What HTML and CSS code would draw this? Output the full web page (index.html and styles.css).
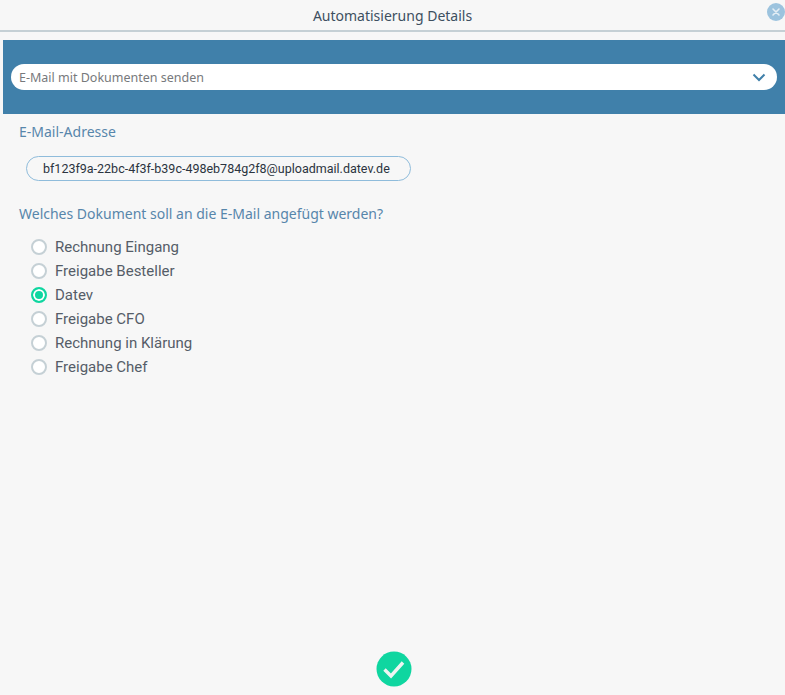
FILE: index.html
```html
<!DOCTYPE html>
<html lang="de">
<head>
    <meta charset="UTF-8">
    <meta name="viewport" content="width=device-width, initial-scale=1.0">
    <title>Automatisierung Details</title>
    <link rel="stylesheet" href="styles.css">
</head>
<body>
    <div class="page">
        <header class="header">
            <h1>Automatisierung Details</h1>
            <button class="closeBtn" aria-label="Schließen">
                <svg width="16" height="16" viewBox="0 0 16 16">
                    <path d="M5 5 L11 11 M11 5 L5 11" stroke="#e4eef5" stroke-width="1.6" stroke-linecap="round" fill="none"/>
                </svg>
            </button>
        </header>

        <div class="actionBar">
            <div class="actionSelect">
                <span>E-Mail mit Dokumenten senden</span>
                <svg width="14" height="9" viewBox="0 0 14 9">
                    <path d="M1.5 1.5 L7 7 L12.5 1.5" stroke="#4080aa" stroke-width="2" fill="none"/>
                </svg>
            </div>
        </div>

        <main class="content">
            <label class="fieldLabel">E-Mail-Adresse</label>
            <div class="emailBox">bf123f9a-22bc-4f3f-b39c-498eb784g2f8@uploadmail.datev.de</div>

            <label class="fieldLabel question">Welches Dokument soll an die E-Mail angefügt werden?</label>
            <ul class="options">
                <li><span class="radio"></span>Rechnung Eingang</li>
                <li><span class="radio"></span>Freigabe Besteller</li>
                <li><span class="radio checked"></span>Datev</li>
                <li><span class="radio"></span>Freigabe CFO</li>
                <li><span class="radio"></span>Rechnung in Klärung</li>
                <li><span class="radio"></span>Freigabe Chef</li>
            </ul>
        </main>

        <footer class="footer">
            <button class="confirmBtn" aria-label="Bestätigen">
                <svg width="36" height="36" viewBox="0 0 36 36">
                    <circle cx="18" cy="18" r="17.5" fill="#0fd6a0"/>
                    <path d="M8.5 18.5 L15 25 L27 11.5" stroke="#eef5f2" stroke-width="3.4" fill="none"/>
                </svg>
            </button>
        </footer>
    </div>
</body>
</html>
```

FILE: styles.css
```css
html, body {
    height: 100%;
}

body {
    margin: 0;
    background-color: #f7f7f7;
    font-family: 'Noto Sans', sans-serif;
    overflow: hidden;
}

.page {
    display: flex;
    flex-direction: column;
    height: 695px;
}

.header {
    display: flex;
    align-items: center;
    justify-content: center;
    height: 30px;
    border-bottom: 2px solid #c5d0d5;
    position: relative;
}

.header h1 {
    margin: 0;
    font-size: 14px;
    font-weight: 400;
    color: #3d4f5f;
}

.closeBtn {
    position: absolute;
    top: 3px;
    right: 0;
    width: 18px;
    height: 18px;
    padding: 1px;
    border: none;
    border-radius: 50%;
    background: #9cc3de;
}

.closeBtn svg {
    display: block;
}

.actionBar {
    display: flex;
    align-items: center;
    height: 74px;
    margin: 8px 0 0 3px;
    padding: 0 8px;
    background-color: #4080aa;
}

.actionSelect {
    flex: 1;
    display: flex;
    align-items: center;
    justify-content: space-between;
    height: 26px;
    padding: 0 11px 0 8px;
    background: white;
    border-radius: 13px;
    font-size: 12.5px;
    color: #77797c;
}

.content {
    flex: 1;
    padding: 8px 19px 0;
}

.fieldLabel {
    display: block;
    font-size: 14px;
    line-height: 20px;
    color: #5786ab;
}

.question {
    margin-top: 23px;
}

.emailBox {
    width: 385px;
    height: 25px;
    margin: 14px 0 0 7px;
    padding-left: 16px;
    box-sizing: border-box;
    border: 1px solid #8fbcdb;
    border-radius: 13px;
    font-family: Roboto, sans-serif;
    font-size: 12.5px;
    line-height: 24px;
    color: #2b3440;
}

.options {
    list-style: none;
    margin: 11px 0 0 12px;
    padding: 0;
}

.options li {
    display: flex;
    align-items: center;
    height: 24px;
    font-family: Roboto, sans-serif;
    font-size: 15px;
    color: #555d68;
}

.radio {
    width: 12px;
    height: 12px;
    margin-right: 8px;
    border: 2px solid #c5d0d5;
    border-radius: 50%;
    background: white;
}

.radio.checked {
    border-color: #0fd6a0;
    background: #0fd6a0;
    box-shadow: inset 0 0 0 2px white;
}

.footer {
    display: flex;
    justify-content: center;
    padding: 0 0 8px 3px;
}

.confirmBtn {
    display: block;
    padding: 0;
    border: none;
    background: none;
    height: 36px;
}
```
